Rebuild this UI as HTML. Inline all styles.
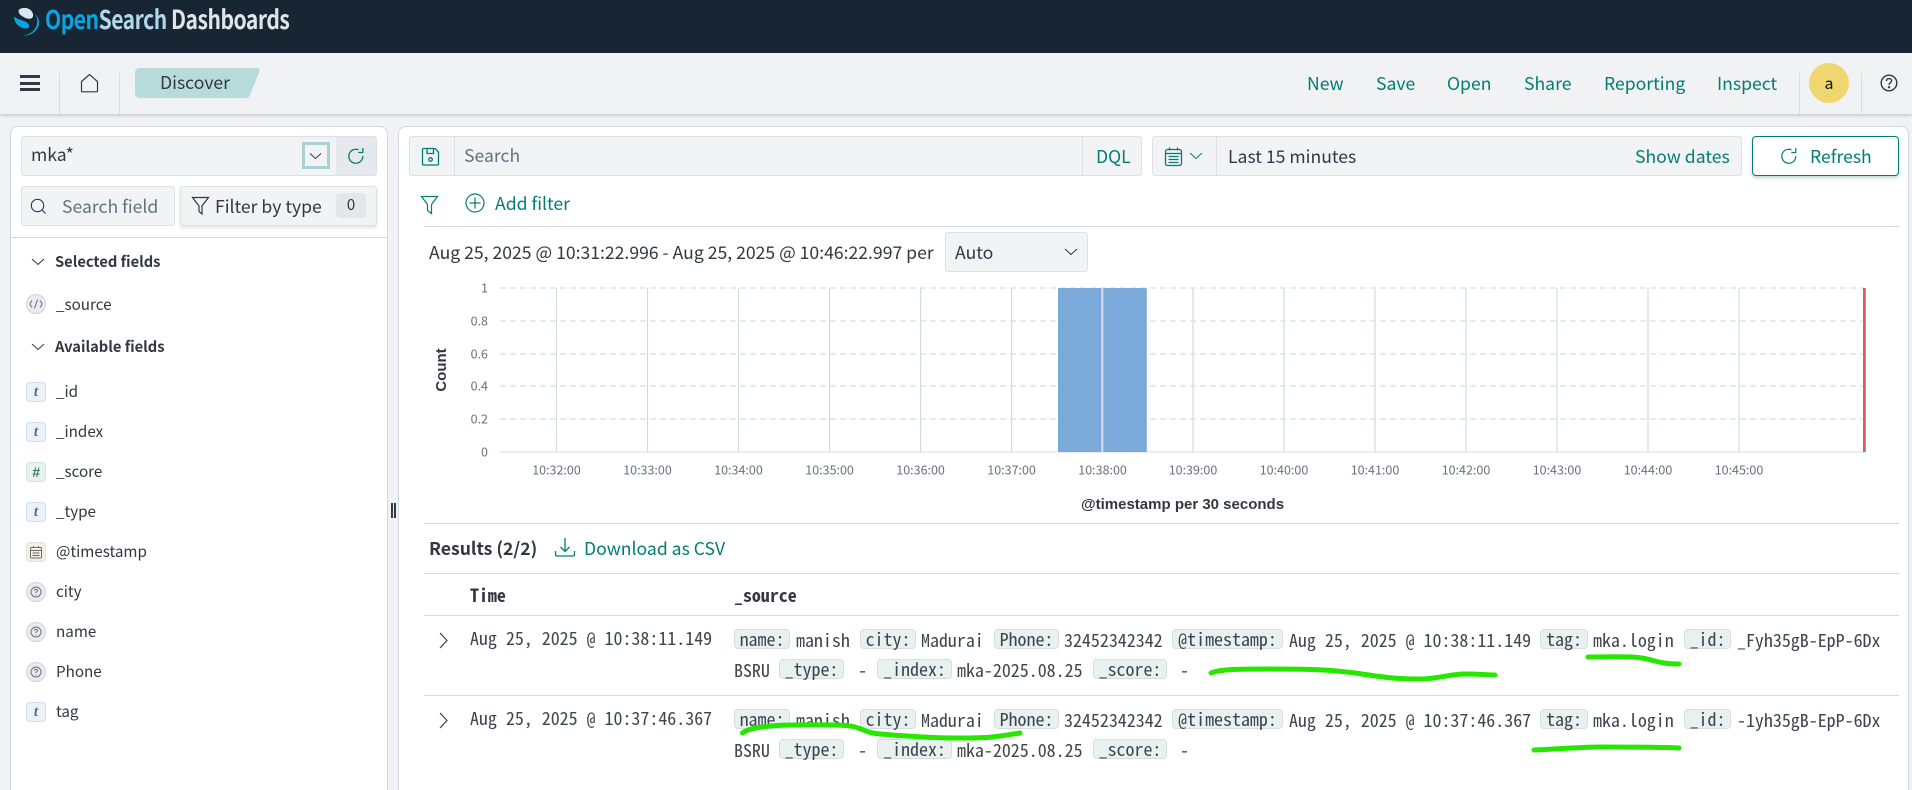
<!DOCTYPE html>
<html><head><meta charset="utf-8"><style>
html,body{margin:0;padding:0;width:1912px;height:790px;overflow:hidden;background:#f1f2f4}
body{position:relative;font-family:"Noto Sans CJK JP","Liberation Sans",sans-serif;font-size:17.6px;color:#343741}
.a{position:absolute;box-sizing:border-box}
.t{position:absolute;white-space:nowrap;line-height:24px;height:24px}
.f{font-size:15.2px}
.teal{color:#017d73}
.box{position:absolute;box-sizing:border-box;background:#f2f3f5;border:1px solid #dde1e6;border-radius:3px}
.row{position:absolute;left:0;width:1912px;height:60px}
.m{position:absolute;white-space:nowrap;font-family:"Noto Sans Mono CJK JP","Liberation Mono",monospace;font-size:17.95px;line-height:20px;height:20px;color:#3f444e}
.k{position:absolute;box-sizing:border-box;height:20px;background:#e6f1f0;border:1px solid #d3dfde;border-radius:4px;font-family:"Noto Sans Mono CJK JP","Liberation Mono",monospace;font-size:17.95px;line-height:18px;text-align:center;white-space:nowrap;color:#3f444e}
.fi{position:absolute;left:26px;width:20px;height:20px;box-sizing:border-box;border-radius:4px;text-align:center;font-size:15px;font-style:italic;font-weight:700;line-height:18px}
.ft{background:#ebf2f9;border:1px solid #cfdfee;color:#4a7194;font-family:"Liberation Serif",serif}
svg{position:absolute;left:0;top:0;overflow:visible}
</style></head><body>
<div class="a" style="left:0;top:0;width:1912px;height:53px;background:#182533"></div>
<svg width="28" height="30" style="left:13px;top:7px"><path d="M6 2.500C10 0 15 .5 18 3.500c2.500 2.500 2.800 6 1 7.500-2.500 1.500-5.500.5-8-.8C7.500 8.500 4.500 6 6 2.500z" fill="#d7e8f0"/><path d="M1 9.500c0 5 3 9 7.500 11 3 1.300 6.500 1.500 7.500-.5 1-2.500-1.500-4.500-5-6C7.500 12.500 3.500 12 1 9.500z" fill="#0aa5e0"/><path d="M22 7c3 4.500 3 9.500.5 14-2.500 4.500-7.500 7-12.500 7.500 5.500.5 11-2 14-6.500 3.500-5 2.500-11-2-15z" fill="#0aa5e0"/></svg>
<div class="t" style="left:45px;top:2px;height:34px;line-height:34px;font-size:26px;font-weight:700;letter-spacing:-.6px;transform:scaleX(.81);transform-origin:0 50%"><span style="color:#0aa5e0">Open</span><span style="color:#b0d8ec">Search</span> <span style="color:#dfe6ea">Dashboards</span></div>

<div class="a" style="left:0;top:53px;width:1912px;height:61px;background:#f1f2f4;box-shadow:0 1px 4px rgba(60,70,90,.3)"></div>
<div class="a" style="left:20px;top:75px;width:20px;height:3px;background:#343741"></div>
<div class="a" style="left:20px;top:82px;width:20px;height:3px;background:#343741"></div>
<div class="a" style="left:20px;top:88px;width:20px;height:3px;background:#343741"></div>
<div class="a" style="left:59px;top:73px;width:1px;height:41px;background:#d9dde3"></div>
<div class="a" style="left:119px;top:73px;width:1px;height:41px;background:#d9dde3"></div>
<div class="a" style="left:1799px;top:73px;width:1px;height:41px;background:#d9dde3"></div>
<div class="a" style="left:1861px;top:73px;width:1px;height:41px;background:#d9dde3"></div>
<svg width="20" height="20" style="left:80px;top:73px" fill="none" stroke="#343741" stroke-width="1.2"><path d="M1.500 8.500L9.500 1.500l8 7V18a.8.8 0 0 1-.8.8H2.300a.8.8 0 0 1-.8-.8z"/></svg>
<svg width="126" height="30" style="left:135px;top:68px"><path d="M5 0H122c2 0 3 1 2.500 3L115 27c-.7 2-2 3-4 3H5c-3 0-5-2-5-5V5c0-3 2-5 5-5z" fill="#b7dbda"/></svg>
<div class="t" style="left:160px;top:71px">Discover</div>
<div class="t teal" style="left:1307px;top:72px">New</div>
<div class="t teal" style="left:1376px;top:72px">Save</div>
<div class="t teal" style="left:1447px;top:72px">Open</div>
<div class="t teal" style="left:1524px;top:72px">Share</div>
<div class="t teal" style="left:1604px;top:72px">Reporting</div>
<div class="t teal" style="left:1717px;top:72px">Inspect</div>
<div class="a" style="left:1809px;top:63px;width:40px;height:40px;border-radius:50%;background:#efd66e;text-align:center;line-height:38px;font-size:16px;color:#111">a</div>
<svg width="18" height="18" style="left:1880px;top:74px" fill="none" stroke="#343741" stroke-width="1.400"><circle cx="9" cy="9" r="7.800"/><path d="M6.500 7c0-1.500 1.100-2.400 2.500-2.400s2.600 1 2.600 2.300c0 1.900-2.600 2-2.600 4"/><circle cx="9" cy="13.200" r=".5" fill="#343741"/></svg>

<div class="a" style="left:10px;top:126px;width:378px;height:680px;background:#fff;border:1px solid #d3d8e0;border-radius:8px"></div>
<div class="a" style="left:398px;top:126px;width:1511px;height:680px;background:#fff;border:1px solid #d3d8e0;border-radius:8px"></div>

<div class="box" style="left:21px;top:136px;width:356px;height:40px"></div>
<div class="a" style="left:336px;top:137px;width:40px;height:38px;background:#e6e9ec"></div>
<div class="t" style="left:31px;top:143px">mka*</div>
<div class="a" style="left:302px;top:142px;width:28px;height:27px;border:3px solid #a9d3d3"></div>
<svg width="14" height="8" style="left:309px;top:152px" fill="none" stroke="#343741"><path d="M1 1.500l5.500 5 5.500-5"/></svg>
<svg width="18" height="18" style="left:347px;top:147px" fill="none" stroke="#017d73" stroke-width="1.300"><path d="M11.500 2.800A7 7 0 1 0 15.800 9"/><path d="M15.800 1v4.500h-4.500"/></svg>
<div class="box" style="left:21px;top:186px;width:154px;height:40px"></div>
<svg width="18" height="18" style="left:30px;top:198px" fill="none" stroke="#343741" stroke-width="1.100"><circle cx="7.500" cy="7.500" r="6.200"/><path d="M12 12l3.500 3.500"/></svg>
<div class="t" style="left:62px;top:195px;color:#69707d">Search field</div>
<div class="box" style="left:180px;top:186px;width:197px;height:40px;box-shadow:0 2px 3px rgba(60,70,90,.15)"></div>
<svg width="20" height="20" style="left:191px;top:196px" fill="none" stroke="#343741" stroke-width="1.200"><path d="M1.500 1.500h16L11 10v8l-3-2.500V10z"/></svg>
<div class="t" style="left:215px;top:195px">Filter by type</div>
<div class="a" style="left:336px;top:193px;width:30px;height:25px;border-radius:4px;background:#e3e6ea;text-align:center;line-height:24px;font-size:15px">0</div>
<div class="a" style="left:11px;top:237px;width:376px;height:1px;background:#d3d8e0"></div>

<svg width="14" height="8" style="left:31px;top:258px" fill="none" stroke="#343741"><path d="M1 1l6 5.500L13 1"/></svg>
<div class="t" style="left:55px;top:250px;font-size:14.700px;font-weight:600">Selected fields</div>
<div class="a" style="left:26px;top:294px;width:20px;height:20px;border-radius:50%;background:#e9ebee;border:1px solid #cfd4db"></div>
<svg width="14" height="10" style="left:29px;top:299px" fill="none" stroke="#69707d" stroke-width="1"><path d="M3 1.500L.8 5 3 8.500M11 1.500L13.200 5 11 8.500M8.500 .5L5.500 9.500"/></svg>
<div class="t f" style="left:56px;top:292px">_source</div>
<svg width="14" height="8" style="left:31px;top:343px" fill="none" stroke="#343741"><path d="M1 1l6 5.500L13 1"/></svg>
<div class="t" style="left:55px;top:335px;font-size:14.700px;font-weight:600">Available fields</div>

<div class="fi ft" style="top:382px">t</div><div class="t f" style="left:56px;top:379px">_id</div>
<div class="fi ft" style="top:422px">t</div><div class="t f" style="left:56px;top:419px">_index</div>
<div class="fi" style="top:462px;background:#e6f4ee;border:1px solid #cfe7dc;color:#3d7a63;font-family:'Liberation Sans',sans-serif;font-size:14px">#</div><div class="t f" style="left:56px;top:459px">_score</div>
<div class="fi ft" style="top:502px">t</div><div class="t f" style="left:56px;top:499px">_type</div>
<div class="fi" style="top:542px;background:#f3f0e9;border:1px solid #e6e1d6"></div>
<svg width="14" height="14" style="left:29px;top:545px" fill="none" stroke="#6f6a5c" stroke-width="1"><rect x="1.500" y="2.500" width="11" height="10.500" rx="1"/><path d="M1.500 5.500h11M4.500 1v2M9.500 1v2M3.500 8h7M3.500 10.500h7" /></svg>
<div class="t f" style="left:56px;top:539px">@timestamp</div>
<div class="a" style="left:26px;top:582px;width:20px;height:20px;border-radius:50%;background:#e9ebee;border:1px solid #cfd4db"></div>
<svg width="12" height="12" style="left:30px;top:586px" fill="none" stroke="#69707d"><circle cx="6" cy="6" r="5"/><path d="M4.500 4.700c0-2 3-2 3 0 0 1-1.500 1-1.500 2.300M6 8.500v.7"/></svg>
<div class="t f" style="left:56px;top:579px">city</div>
<div class="a" style="left:26px;top:622px;width:20px;height:20px;border-radius:50%;background:#e9ebee;border:1px solid #cfd4db"></div>
<svg width="12" height="12" style="left:30px;top:626px" fill="none" stroke="#69707d"><circle cx="6" cy="6" r="5"/><path d="M4.500 4.700c0-2 3-2 3 0 0 1-1.500 1-1.500 2.300M6 8.500v.7"/></svg>
<div class="t f" style="left:56px;top:619px">name</div>
<div class="a" style="left:26px;top:662px;width:20px;height:20px;border-radius:50%;background:#e9ebee;border:1px solid #cfd4db"></div>
<svg width="12" height="12" style="left:30px;top:666px" fill="none" stroke="#69707d"><circle cx="6" cy="6" r="5"/><path d="M4.500 4.700c0-2 3-2 3 0 0 1-1.500 1-1.500 2.300M6 8.500v.7"/></svg>
<div class="t f" style="left:56px;top:659px">Phone</div>
<div class="fi ft" style="top:702px">t</div><div class="t f" style="left:56px;top:699px">tag</div>
<div class="a" style="left:391px;top:503px;width:2px;height:15px;background:#343741"></div>
<div class="a" style="left:394px;top:503px;width:2px;height:15px;background:#343741"></div>

<div class="box" style="left:409px;top:136px;width:733px;height:40px"></div>
<div class="a" style="left:454px;top:137px;width:1px;height:38px;background:#dde1e6"></div>
<div class="a" style="left:1082px;top:137px;width:1px;height:38px;background:#dde1e6"></div>
<svg width="20" height="20" style="left:421px;top:147px" fill="none" stroke="#017d73" stroke-width="1.300"><path d="M2.500 1.500h11.500l3.500 3.500v12a1 1 0 0 1-1 1h-14a1 1 0 0 1-1-1v-14.500a1 1 0 0 1 1-1z"/><path d="M6 1.500v5h6.500v-5"/><circle cx="9.500" cy="12.500" r="1.800"/></svg>
<div class="t" style="left:464px;top:144px;color:#69707d">Search</div>
<div class="t teal" style="left:1096px;top:145px">DQL</div>
<div class="box" style="left:1152px;top:136px;width:590px;height:40px"></div>
<div class="a" style="left:1216px;top:137px;width:1px;height:38px;background:#dde1e6"></div>
<svg width="20" height="20" style="left:1164px;top:147px" fill="none" stroke="#017d73" stroke-width="1.300"><rect x="1.500" y="2.500" width="16" height="16" rx="2"/><path d="M1.500 6.500h16M5.500 .5v3M13.500 .5v3M4.500 9.500h10M4.500 12.500h10M4.500 15.500h10" /></svg>
<svg width="14" height="8" style="left:1189px;top:152px" fill="none" stroke="#017d73"><path d="M1 1l6 5.500L13 1"/></svg>
<div class="t" style="left:1228px;top:145px">Last 15 minutes</div>
<div class="t teal" style="left:1635px;top:145px">Show dates</div>
<div class="a" style="left:1752px;top:136px;width:147px;height:40px;background:#fff;border:1px solid #017d73;border-radius:4px;box-shadow:0 2px 3px rgba(0,100,90,.25)"></div>
<svg width="18" height="18" style="left:1780px;top:147px" fill="none" stroke="#017d73" stroke-width="1.200"><path d="M11.500 2.800A7 7 0 1 0 15.800 9"/><path d="M15.800 1v4.500h-4.500"/></svg>
<div class="t teal" style="left:1810px;top:145px">Refresh</div>

<svg width="20" height="20" style="left:420px;top:195px" fill="none" stroke="#017d73" stroke-width="1.200"><path d="M1.500 1.500h16L11.500 9.500v9l-4-3V9.500z"/></svg>
<svg width="20" height="20" style="left:465px;top:193px" fill="none" stroke="#017d73" stroke-width="1.200"><circle cx="10" cy="10" r="9"/><path d="M10 4.500v11M4.500 10h11"/></svg>
<div class="t teal" style="left:495px;top:192px">Add filter</div>
<div class="a" style="left:424px;top:226px;width:1475px;height:1px;background:#d3d8e0"></div>

<div class="t" style="left:429px;top:241px">Aug 25, 2025 @ 10:31:22.996 - Aug 25, 2025 @ 10:46:22.997 per</div>
<div class="box" style="left:945px;top:232px;width:143px;height:40px"></div>
<div class="t" style="left:955px;top:241px">Auto</div>
<svg width="14" height="8" style="left:1064px;top:248px" fill="none" stroke="#343741"><path d="M1 1l6 5.500L13 1"/></svg>

<svg width="1912" height="790">
<g stroke="#d9dde9" stroke-width="1.200" stroke-dasharray="6 4"><path d="M500 288H1864M500 321H1864M500 354H1864M500 386H1864M500 419H1864"/></g>
<path d="M500 452H1864" stroke="#e4e7ee" stroke-width="1.500"/>
<g stroke="#d5d9e6" stroke-width="1.200"><path d="M556.500 288V452M647.500 288V452M738.500 288V452M829.600 288V452M920.600 288V452M1011.600 288V452M1102.600 288V452M1193 288V452M1284 288V452M1375 288V452M1466 288V452M1557 288V452M1648 288V452M1739 288V452"/></g>
<rect x="1058" y="288" width="43.500" height="164" fill="#7aa9da"/>
<rect x="1103.300" y="288" width="43.500" height="164" fill="#7aa9da"/>
<rect x="1863" y="288" width="2.800" height="164" fill="#d95f5a"/>
<g font-family="'Noto Sans CJK JP','Liberation Sans',sans-serif" font-size="12.500" fill="#69707d" text-anchor="end">
<text x="488" y="292.500">1</text><text x="488" y="325.500">0.8</text><text x="488" y="358.500">0.6</text><text x="488" y="390.500">0.4</text><text x="488" y="423.500">0.2</text><text x="488" y="456.500">0</text></g>
<g font-family="'Noto Sans CJK JP','Liberation Sans',sans-serif" font-size="12.500" fill="#69707d" text-anchor="middle">
<text x="556.500" y="474.500">10:32:00</text><text x="647.500" y="474.500">10:33:00</text><text x="738.500" y="474.500">10:34:00</text><text x="829.600" y="474.500">10:35:00</text><text x="920.600" y="474.500">10:36:00</text><text x="1011.600" y="474.500">10:37:00</text><text x="1102.600" y="474.500">10:38:00</text><text x="1193" y="474.500">10:39:00</text><text x="1284" y="474.500">10:40:00</text><text x="1375" y="474.500">10:41:00</text><text x="1466" y="474.500">10:42:00</text><text x="1557" y="474.500">10:43:00</text><text x="1648" y="474.500">10:44:00</text><text x="1739" y="474.500">10:45:00</text></g>
<text transform="translate(446 370) rotate(-90)" text-anchor="middle" font-family="'Liberation Sans',sans-serif" font-weight="700" font-size="15" fill="#343741">Count</text>
<text x="1081" y="509" font-family="'Liberation Sans',sans-serif" font-weight="700" font-size="15" fill="#343741">@timestamp per 30 seconds</text>
</svg>

<div class="a" style="left:424px;top:523px;width:1475px;height:1px;background:#d3d8e0"></div>
<div class="t" style="left:429px;top:537px;font-weight:600">Results (2/2)</div>
<svg width="22" height="22" style="left:554px;top:537px" fill="none" stroke="#017d73" stroke-width="1.300"><path d="M11 1v13M6.500 10l4.500 4.500 4.500-4.500M1.500 14v3.500c0 1 .5 1.500 1.500 1.500h16c1 0 1.500-.5 1.500-1.500V14"/></svg>
<div class="t teal" style="left:584px;top:537px">Download as CSV</div>
<div class="a" style="left:424px;top:573px;width:1475px;height:1px;background:#d3d8e0"></div>
<div class="m" style="left:470px;top:585px;font-weight:700;color:#343741">Time</div>
<div class="m" style="left:734px;top:585px;font-weight:700;color:#343741">_source</div>
<div class="a" style="left:424px;top:615px;width:1475px;height:1px;background:#d3d8e0"></div>
<div class="a" style="left:424px;top:695px;width:1475px;height:1px;background:#d3d8e0"></div>

<div class="row" style="top:629px">
<svg width="10" height="17" style="left:439px;top:3px" fill="none" stroke="#343741" stroke-width="1.100"><path d="M1 1l7 7.500L1 16"/></svg>
<div class="m" style="left:470px;top:-1px">Aug 25, 2025 @ 10:38:11.149</div>
<div class="k" style="left:734px;top:0;width:56px">name:</div><div class="m" style="left:796px;top:1px">manish</div>
<div class="k" style="left:860px;top:0;width:56px">city:</div><div class="m" style="left:921px;top:1px">Madurai</div>
<div class="k" style="left:994px;top:0;width:65px">Phone:</div><div class="m" style="left:1064px;top:1px">32452342342</div>
<div class="k" style="left:1172px;top:0;width:111px">@timestamp:</div><div class="m" style="left:1289px;top:1px">Aug 25, 2025 @ 10:38:11.149</div>
<div class="k" style="left:1540px;top:0;width:48px">tag:</div><div class="m" style="left:1593px;top:1px">mka.login</div>
<div class="k" style="left:1684px;top:0;width:47px">_id:</div><div class="m" style="left:1737px;top:1px">_Fyh35gB-EpP-6Dx</div>
<div class="m" style="left:734px;top:31px">BSRU</div>
<div class="k" style="left:779px;top:30px;width:65px">_type:</div><div class="m" style="left:858px;top:31px">-</div>
<div class="k" style="left:877px;top:30px;width:75px">_index:</div><div class="m" style="left:957px;top:31px">mka-2025.08.25</div>
<div class="k" style="left:1093px;top:30px;width:74px">_score:</div><div class="m" style="left:1180px;top:31px">-</div>
</div>
<div class="row" style="top:709px">
<svg width="10" height="17" style="left:439px;top:3px" fill="none" stroke="#343741" stroke-width="1.100"><path d="M1 1l7 7.500L1 16"/></svg>
<div class="m" style="left:470px;top:-1px">Aug 25, 2025 @ 10:37:46.367</div>
<div class="k" style="left:734px;top:0;width:56px">name:</div><div class="m" style="left:796px;top:1px">manish</div>
<div class="k" style="left:860px;top:0;width:56px">city:</div><div class="m" style="left:921px;top:1px">Madurai</div>
<div class="k" style="left:994px;top:0;width:65px">Phone:</div><div class="m" style="left:1064px;top:1px">32452342342</div>
<div class="k" style="left:1172px;top:0;width:111px">@timestamp:</div><div class="m" style="left:1289px;top:1px">Aug 25, 2025 @ 10:37:46.367</div>
<div class="k" style="left:1540px;top:0;width:48px">tag:</div><div class="m" style="left:1593px;top:1px">mka.login</div>
<div class="k" style="left:1684px;top:0;width:47px">_id:</div><div class="m" style="left:1737px;top:1px">-1yh35gB-EpP-6Dx</div>
<div class="m" style="left:734px;top:31px">BSRU</div>
<div class="k" style="left:779px;top:30px;width:65px">_type:</div><div class="m" style="left:858px;top:31px">-</div>
<div class="k" style="left:877px;top:30px;width:75px">_index:</div><div class="m" style="left:957px;top:31px">mka-2025.08.25</div>
<div class="k" style="left:1093px;top:30px;width:74px">_score:</div><div class="m" style="left:1180px;top:31px">-</div>
</div>

<svg width="1912" height="790" fill="none" stroke="#27e600" stroke-width="5" stroke-linecap="round" stroke-linejoin="round">
<path d="M1211 673C1220 669 1240 669 1270 669S1330 669 1362 674 1405 679 1421 679 1450 674 1465 674 1490 675 1495 675"/>
<path d="M1588 657C1610 657 1630 656 1642 658S1660 664 1679 664"/>
<path d="M1534 750C1560 749 1580 747 1600 747S1660 747 1679 748"/>
<path d="M742.500 733C748 728 770 725 793 725S845 724 855 727 868 733 880 734 930 738 960 738 995 737 1020 733"/>
</svg>
</body></html>
